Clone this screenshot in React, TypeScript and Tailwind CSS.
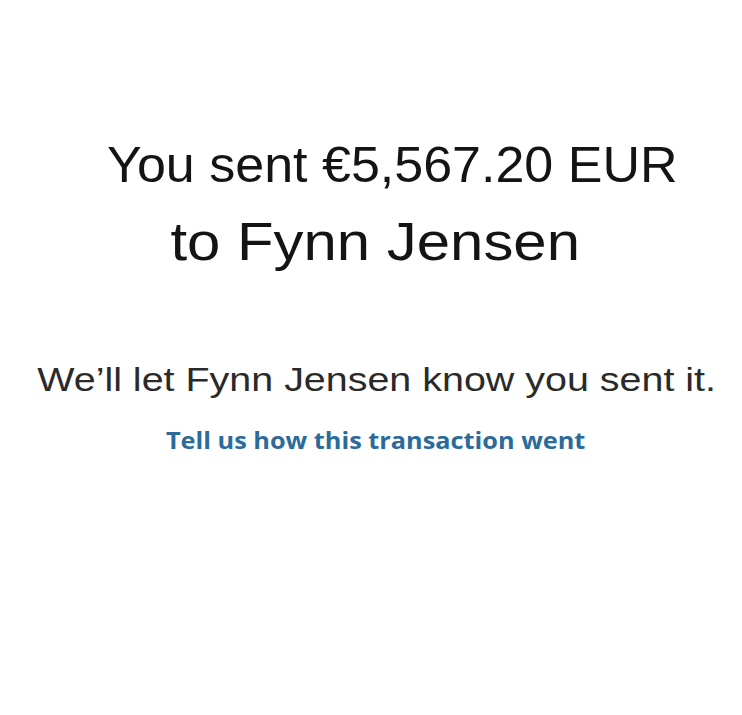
export default function App() {
  return (
    <div className="flex h-[715px] w-full flex-col items-center bg-white pt-[140px]">
      <div className="ml-[42px] origin-center scale-x-[1.04] whitespace-nowrap font-['Liberation_Sans',Arial,sans-serif] text-[50px] leading-[50px] text-[#141414]">
        You sent €5,567.20 EUR
      </div>
      <div className="mt-[25px] ml-[8px] origin-center scale-x-[1.13] whitespace-nowrap font-['Liberation_Sans',Arial,sans-serif] text-[53px] leading-[53px] text-[#141414]">
        to Fynn Jensen
      </div>
      <div className="mt-[94px] ml-[12px] origin-center scale-x-[1.16] whitespace-nowrap font-['Liberation_Sans',Arial,sans-serif] text-[34px] leading-[34px] text-[#2a2a2a]">
        We’ll let Fynn Jensen know you sent it.
      </div>
      <a
        href="#"
        className="mt-[33px] ml-[10px] origin-center scale-x-[1.1] whitespace-nowrap font-['Open_Sans',sans-serif] text-[23px] leading-[23px] font-bold text-[#2b6b9b]"
      >
        Tell us how this transaction went
      </a>
    </div>
  );
}
